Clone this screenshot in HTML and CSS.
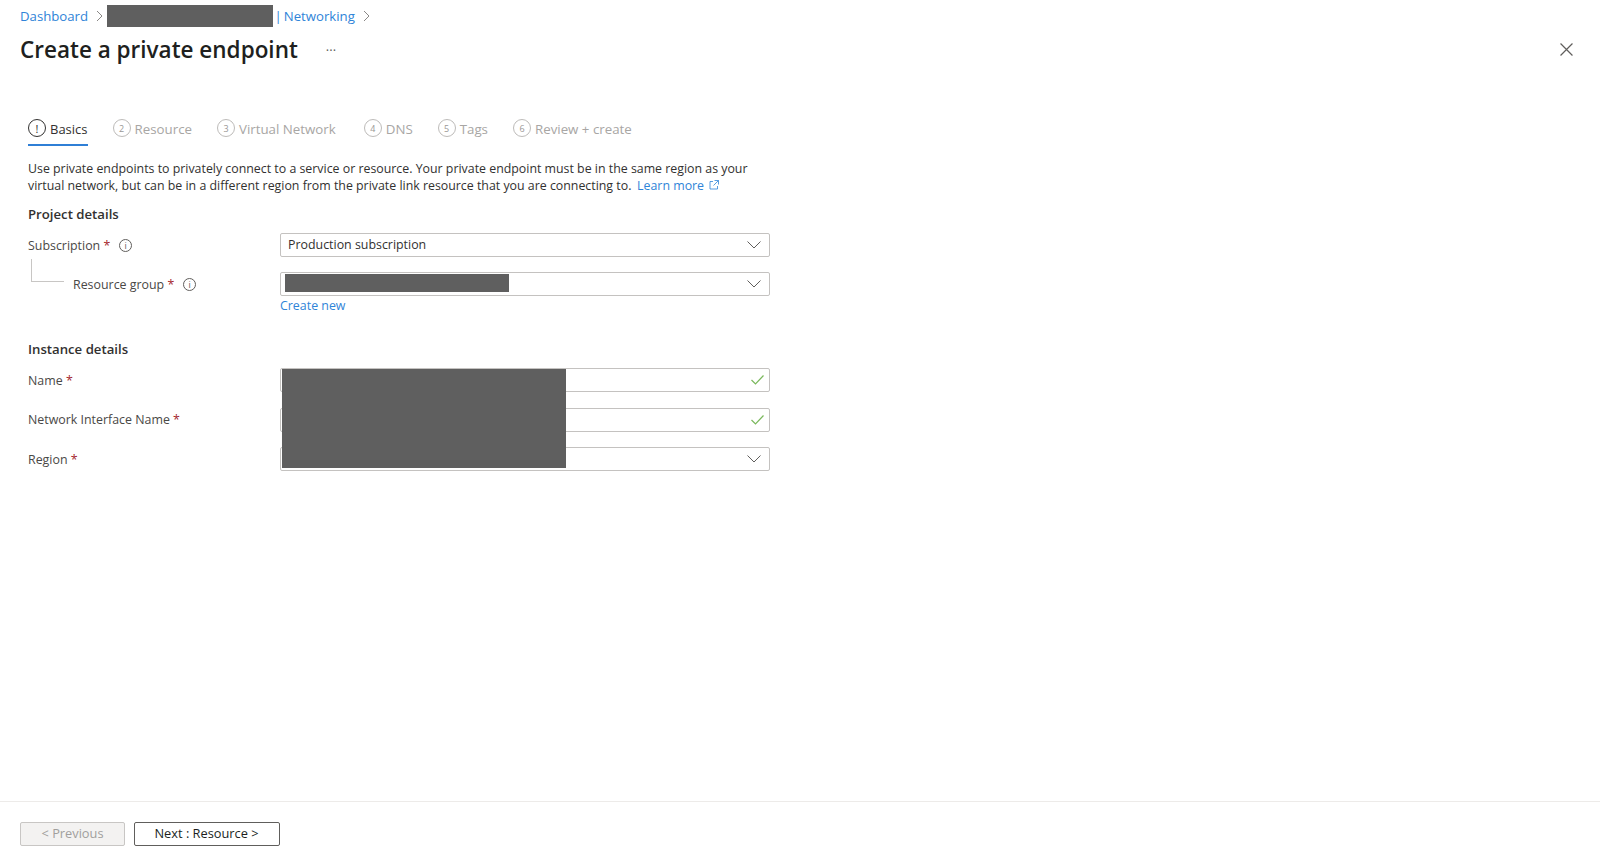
FILE: index.html
```html
<!DOCTYPE html>
<html lang="en">
<head>
<meta charset="utf-8">
<title>Create a private endpoint</title>
<link rel="stylesheet" href="styles.css">
</head>
<body>
<div class="page">
  <header class="head">
    <nav class="crumbs">
      <a class="link" href="#">Dashboard</a>
      <svg class="crumb-chev" viewBox="0 0 7 12"><path d="M1 1l5 5-5 5"/></svg>
      <span class="mask mask-crumb"></span>
      <a class="link crumb-net" href="#">| Networking</a>
      <svg class="crumb-chev" viewBox="0 0 7 12"><path d="M1 1l5 5-5 5"/></svg>
    </nav>
    <div class="title-row">
      <h1 class="title">Create a private endpoint</h1>
      <span class="more">···</span>
      <svg class="close" viewBox="0 0 12 12"><path d="M.5.5l11 11M11.5.5l-11 11"/></svg>
    </div>
  </header>

  <main class="main">
    <div class="tabs">
      <div class="tab tab-active"><span class="num num-active">!</span><span>Basics</span></div>
      <div class="tab"><span class="num">2</span><span>Resource</span></div>
      <div class="tab tab-wide"><span class="num">3</span><span>Virtual Network</span></div>
      <div class="tab"><span class="num">4</span><span>DNS</span></div>
      <div class="tab"><span class="num">5</span><span>Tags</span></div>
      <div class="tab"><span class="num">6</span><span>Review + create</span></div>
    </div>

    <p class="intro">Use private endpoints to privately connect to a service or resource. Your private endpoint must be in the same region as your<br>virtual network, but can be in a different region from the private link resource that you are connecting to. <a class="link learn" href="#">Learn more</a> <svg class="ext" viewBox="0 0 10 10"><path d="M4 1.500H1V9h7.500V6M5.500.5h4v4M9.500.5l-5 5"/></svg></p>

    <h2 class="section">Project details</h2>
    <div class="form">
      <div class="label">Subscription <span class="req">*</span><span class="info">i</span></div>
      <div class="field">Production subscription
        <svg class="chev" viewBox="0 0 14 8"><path d="M.5.5L7 7 13.500.5"/></svg>
      </div>
      <div class="label label-child"><span class="tree"></span>Resource group <span class="req">*</span><span class="info">i</span></div>
      <div class="field-wrap">
        <div class="field">
          <span class="mask mask-rg"></span>
          <svg class="chev" viewBox="0 0 14 8"><path d="M.5.5L7 7 13.500.5"/></svg>
        </div>
        <a class="link create" href="#">Create new</a>
      </div>
    </div>

    <h2 class="section section-instance">Instance details</h2>
    <div class="form form-instance">
      <span class="mask mask-big"></span>
      <div class="label">Name <span class="req">*</span></div>
      <div class="field"><svg class="check" viewBox="0 0 13 10"><path d="M.5 5l4 4L12.500.5"/></svg></div>
      <div class="label">Network Interface Name <span class="req">*</span></div>
      <div class="field"><svg class="check" viewBox="0 0 13 10"><path d="M.5 5l4 4L12.500.5"/></svg></div>
      <div class="label">Region <span class="req">*</span></div>
      <div class="field"><svg class="chev" viewBox="0 0 14 8"><path d="M.5.5L7 7 13.500.5"/></svg></div>
    </div>
  </main>

  <footer class="foot">
    <button class="btn btn-prev" type="button">&lt; Previous</button>
    <button class="btn btn-next" type="button">Next : Resource &gt;</button>
  </footer>
</div>
</body>
</html>
```

FILE: styles.css
```css
* { box-sizing: border-box; }
html, body { margin: 0; height: 100%; background: #fff; }
body {
  font-family: "Open Sans", "Noto Sans", sans-serif;
  font-size: 12.400px;
  color: #323130;
  overflow: hidden;
}
.page { height: 866px; display: flex; flex-direction: column; }
.link { color: #2f84d8; text-decoration: none; }

.mask { display: block; background: #5f5f5f; }

.head { padding: 0 27px 0 20px; }
.crumbs { height: 32px; display: flex; align-items: center; font-size: 13.200px; }
.crumb-chev { width: 7px; height: 12px; margin: 0 4px 0 8px; fill: none; stroke: #8a8886; stroke-width: 1; }
.mask-crumb { width: 166px; height: 22px; }
.crumb-net { margin-left: 1.500px; word-spacing: -1.500px; }

.title-row { height: 35px; display: flex; align-items: center; }
.title { margin: 0; font-size: 22.500px; font-weight: 600; color: #201f1e; line-height: 34px; }
.more { margin-left: 28px; color: #605e5c; font-size: 13px; }
.close { width: 13px; height: 13px; margin-left: auto; fill: none; stroke: #605e5c; stroke-width: 1.100; }

.main { flex: 1; padding: 51px 28px 0; }

.tabs { display: flex; gap: 25px; height: 28px; }
.tab { display: flex; align-items: flex-start; gap: 4px; color: #a8a6a4; font-size: 13.300px; line-height: 20px; padding-top: 1px; height: 28px; }
.tab-active { color: #323130; border-bottom: 2px solid #2f7fd6; font-size: 13px; font-weight: 500; }
.tab-wide { margin-right: 3px; }
.num {
  width: 18px; height: 18px; border: 1px solid #bdbbb9; border-radius: 50%;
  display: flex; align-items: center; justify-content: center; font-size: 9px; font-weight: 400; line-height: 1; color: #9a9896;
}
.num-active { border-color: #323130; color: #323130; font-size: 11px; }

.intro { margin: 14px 0 0; line-height: 17px; font-size: 12.360px; white-space: nowrap; }
.learn { margin-left: 2.500px; }
.ext { width: 10px; height: 10px; margin-left: 2px; fill: none; stroke: #2f84d8; stroke-width: .8; }

.section { margin: 11px 0 0; height: 19px; font-size: 13.200px; line-height: 19px; font-weight: 600; color: #323130; }
.section-instance { margin-top: 25px; }

.form { margin-top: 9px; display: grid; grid-template-columns: 252px 490px; row-gap: 15px; align-items: start; }
.form-instance { position: relative; margin-top: 9.500px; row-gap: 15.500px; }
.label { height: 24px; display: flex; align-items: center; white-space: pre; color: #4a4846; }
.label-child { position: relative; padding-left: 45px; }
.tree { position: absolute; left: 3px; top: -13px; width: 33px; height: 23px; border-left: 1px solid #c8c6c4; border-bottom: 1px solid #c8c6c4; }
.req { color: #a4262c; }
.info {
  width: 13px; height: 13px; margin-left: 9px; border: 1px solid #605e5c; border-radius: 50%;
  display: inline-flex; align-items: center; justify-content: center; font-size: 9px; line-height: 1; color: #605e5c;
}
.field {
  position: relative; height: 24px; border: 1px solid #c4c2c0; border-radius: 2px; background: #fff;
  padding: 0 7px; line-height: 21px; white-space: nowrap;
}
.chev { position: absolute; right: 8px; top: 7px; width: 14px; height: 8px; fill: none; stroke: #605e5c; stroke-width: 1; }
.check { position: absolute; right: 5px; top: 6px; width: 13px; height: 10px; fill: none; stroke: #7ab85c; stroke-width: 1.200; }
.mask-rg { position: absolute; left: 4px; top: 1px; width: 224px; height: 17.500px; }
.mask-big { position: absolute; left: 254px; top: 1px; width: 284px; height: 99px; z-index: 1; }
.create { display: block; margin-top: .5px; line-height: 18px; }

.foot { height: 65px; border-top: 1px solid #edebe9; padding: 20px 20px 0; display: flex; gap: 8.500px; align-items: flex-start; }
.btn { height: 24px; border-radius: 2px; font: inherit; font-size: 12.800px; line-height: 20px; padding: 0 0 2px; background: #fff; }
.btn-prev { width: 105px; background: #f3f2f1; border: 1px solid #c8c6c4; color: #a19f9d; }
.btn-next { width: 146px; border: 1px solid #605e5c; color: #201f1e; }
```
